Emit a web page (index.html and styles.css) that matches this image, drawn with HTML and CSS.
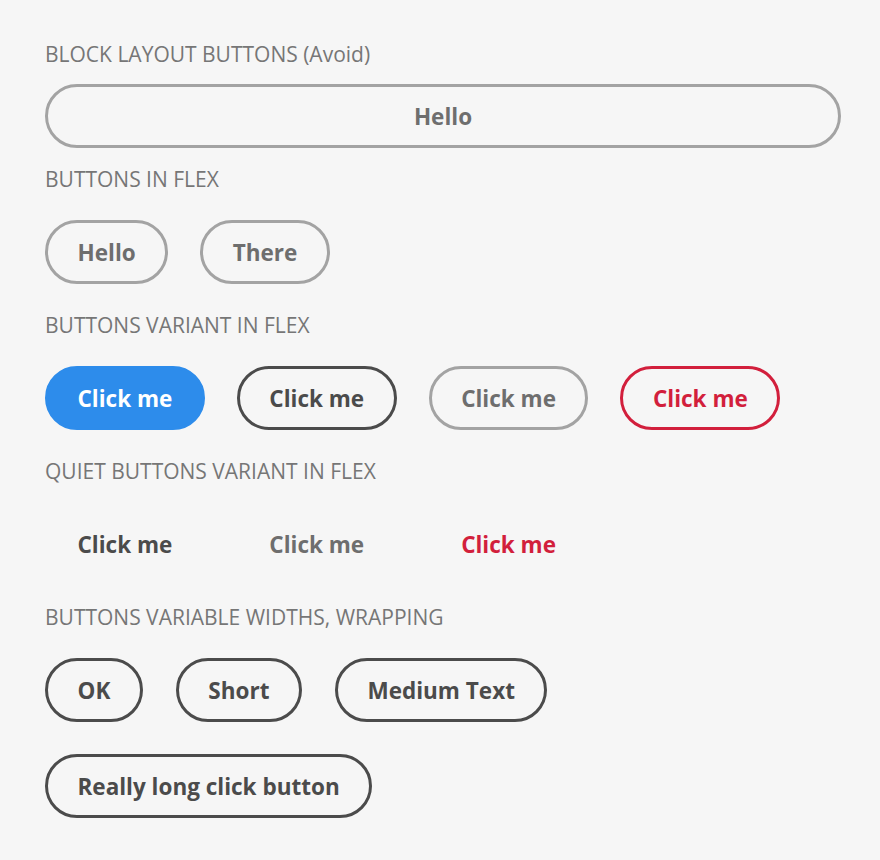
FILE: index.html
```html
<!DOCTYPE html>
<html>
<head>
<meta charset="utf-8">
<link rel="stylesheet" href="styles.css">
</head>
<body>
<main class="page">
  <section class="section">
    <h2 class="label">BLOCK LAYOUT BUTTONS (Avoid)</h2>
    <button class="btn btn-secondary btn-block">Hello</button>
  </section>
  <section class="section">
    <h2 class="label">BUTTONS IN FLEX</h2>
    <div class="row">
      <button class="btn btn-secondary">Hello</button>
      <button class="btn btn-secondary">There</button>
    </div>
  </section>
  <section class="section">
    <h2 class="label">BUTTONS VARIANT IN FLEX</h2>
    <div class="row">
      <button class="btn btn-cta">Click me</button>
      <button class="btn btn-primary">Click me</button>
      <button class="btn btn-secondary">Click me</button>
      <button class="btn btn-negative">Click me</button>
    </div>
  </section>
  <section class="section">
    <h2 class="label">QUIET BUTTONS VARIANT IN FLEX</h2>
    <div class="row">
      <button class="btn btn-quiet btn-primary">Click me</button>
      <button class="btn btn-quiet btn-secondary">Click me</button>
      <button class="btn btn-quiet btn-negative">Click me</button>
    </div>
  </section>
  <section class="section">
    <h2 class="label">BUTTONS VARIABLE WIDTHS, WRAPPING</h2>
    <div class="row row-wrap">
      <button class="btn btn-primary">OK</button>
      <button class="btn btn-primary">Short</button>
      <button class="btn btn-primary">Medium Text</button>
      <button class="btn btn-primary">Really long click button</button>
    </div>
  </section>
</main>
</body>
</html>
```
FILE: styles.css
```css
html, body {
  margin: 0;
  padding: 0;
  background: #f6f6f6;
}
.page {
  padding: 41px 39px 40px 45px;
  display: flex;
  flex-direction: column;
  gap: 18px;
  font-family: "Open Sans", "Noto Sans", sans-serif;
}
.section {
  display: flex;
  flex-direction: column;
  gap: 17px;
}
.label {
  margin: 0;
  font-size: 21px;
  font-weight: 400;
  line-height: 26px;
  color: #767676;
}
.row {
  display: flex;
  gap: 32px;
  padding: 11px 0 10px;
}
.row-wrap {
  flex-wrap: wrap;
  column-gap: 33px;
  row-gap: 32px;
}
.btn {
  box-sizing: border-box;
  height: 64px;
  padding: 0 29.5px;
  border: 3px solid #a3a3a3;
  border-radius: 32px;
  background: transparent;
  font-family: "Open Sans", "Noto Sans", sans-serif;
  font-size: 22.5px;
  font-weight: 700;
  color: #6e6e6e;
  white-space: nowrap;
}
.btn-block {
  width: 100%;
}
.btn-cta {
  background: #2d8ceb;
  border-color: #2d8ceb;
  color: #ffffff;
}
.btn-primary {
  border-color: #4b4b4b;
  color: #4b4b4b;
}
.btn-secondary {
  border-color: #a3a3a3;
  color: #6e6e6e;
}
.btn-negative {
  border-color: #d21f3c;
  color: #d21f3c;
}
.btn-quiet {
  border-color: transparent;
}
```
